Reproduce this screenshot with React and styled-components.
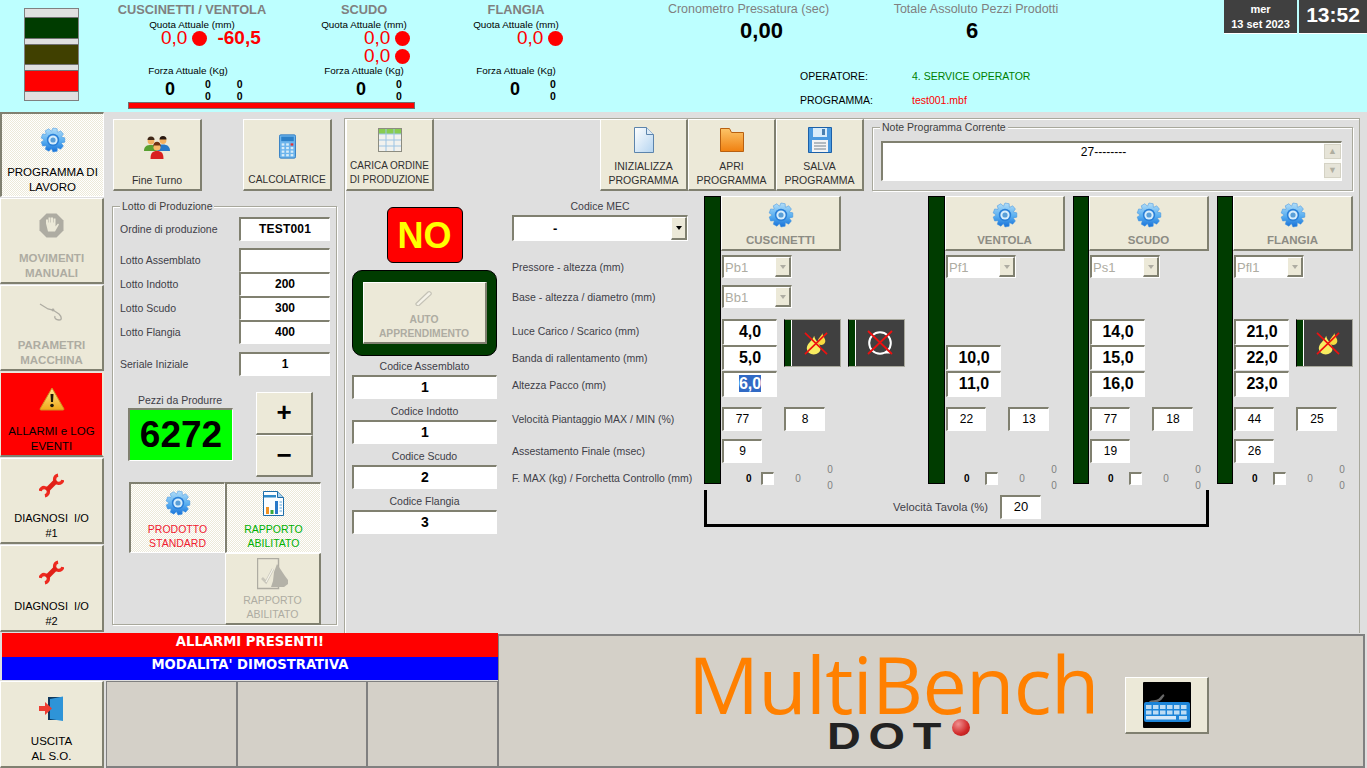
import styled, { createGlobalStyle, css } from 'styled-components';

const FACE = '#ece9d8';
const SHADOW = '#808070';
const GREEN = '#003c00';
const PANEL = '#d4d0c8';

const GlobalStyle = createGlobalStyle`
    html, body { margin: 0; padding: 0; background: #dfdfdf; }
    body { font-family: "Liberation Sans", Arial, sans-serif; font-size: 10px; color: #000; overflow: hidden; }
    * { box-sizing: border-box; }
`;

const raised = css`
    border-style: solid;
    border-width: 1px 2px 2px 1px;
    border-color: #fff ${SHADOW} ${SHADOW} #fff;
`;
const sunken = css`
    border-style: solid;
    border-width: 2px 1px 1px 2px;
    border-color: ${SHADOW} #fff #fff ${SHADOW};
`;

/* ---------- icone ---------- */

const gearPoints = (() => {
    const pts = [];
    const teeth = 9;
    for (let i = 0; i < teeth; i++) {
        const a = (i / teeth) * Math.PI * 2;
        const step = (Math.PI * 2) / teeth;
        [[-0.5, 9], [-0.27, 12], [0.27, 12], [0.5, 9]].forEach(([o, r]) => {
            pts.push(`${(13 + Math.cos(a + o * step * 0.95) * r).toFixed(2)},${(13 + Math.sin(a + o * step * 0.95) * r).toFixed(2)}`);
        });
    }
    return pts.join(' ');
})();

const Gear = () => (
    <svg width="26" height="26" viewBox="0 0 26 26">
        <defs>
            <linearGradient id="gearFill" x1="0" y1="0" x2="0" y2="1">
                <stop offset="0" stopColor="#b4def8" />
                <stop offset="0.55" stopColor="#58aef0" />
                <stop offset="1" stopColor="#1670d8" />
            </linearGradient>
        </defs>
        <polygon points={gearPoints} fill="url(#gearFill)" stroke="#3a90e0" strokeWidth="0.5" />
        <circle cx="13" cy="13" r="6.2" fill="#2a80d8" />
        <circle cx="13" cy="13" r="4.6" fill="#d8eefc" />
        <circle cx="13" cy="13" r="2.6" fill="#5a9fd8" />
    </svg>
);

const People = () => (
    <svg width="26" height="24" viewBox="0 0 26 24">
        <circle cx="7" cy="6" r="3.4" fill="#f4b060" />
        <path d="M3.5 5a3.5 3.5 0 0 1 7 0z" fill="#402818" />
        <path d="M0 16c0-5 3-6 7-6s6 2 6 6z" fill="#58a030" />
        <circle cx="19" cy="5.5" r="3.4" fill="#f4b060" />
        <path d="M15.5 4.5a3.5 3.5 0 0 1 7 0z" fill="#281810" />
        <path d="M13 16c0-5 2-6.5 6-6.5s7 2 7 6.5z" fill="#2878c8" />
        <circle cx="13" cy="12" r="3.6" fill="#f8b868" />
        <path d="M9 12c0-7 8-7 8 0l-1-1.5h-6z" fill="#703010" />
        <path d="M6.5 24c0-6 2-8 6.5-8s6.5 2 6.5 8z" fill="#d82020" />
    </svg>
);

const Calculator = () => (
    <svg width="17" height="25" viewBox="0 0 19 27">
        <rect x="0.5" y="0.5" width="18" height="26" rx="1.5" fill="#6cb4ec" stroke="#2878c0" />
        <rect x="2.5" y="2.5" width="14" height="5" fill="#2c80c8" />
        {[10, 14, 18, 22].map(y => [3, 8, 13].map(x => (
            <rect key={`${x}-${y}`} x={x} y={y} width="3" height="2.5" fill={x === 13 && y === 10 ? '#e83030' : '#d8ecf8'} />
        )))}
    </svg>
);

const TableIcon = () => (
    <svg width="24" height="24" viewBox="0 0 24 24">
        <rect x="0.5" y="0.5" width="23" height="23" fill="#f2f2ee" stroke="#8c8c80" />
        <rect x="1" y="1" width="22" height="5" fill="#88cc50" />
        <path d="M8 1v22M16 1v22M1 6h22M1 12h22M1 18h22" stroke="#9cc4e4" strokeWidth="1" fill="none" />
    </svg>
);

const DocIcon = () => (
    <svg width="20" height="26" viewBox="0 0 20 26">
        <defs>
            <linearGradient id="docFill" x1="0" y1="0" x2="1" y2="1">
                <stop offset="0" stopColor="#ffffff" />
                <stop offset="1" stopColor="#b4d4f0" />
            </linearGradient>
        </defs>
        <path d="M0.5 0.5h12l7 7v18h-19z" fill="url(#docFill)" stroke="#5c84ac" />
        <path d="M12.5 0.5v7h7" fill="#dceaf6" stroke="#5c84ac" />
    </svg>
);

const FolderIcon = () => (
    <svg width="24" height="25" viewBox="0 0 24 25">
        <defs>
            <linearGradient id="folderFill" x1="0" y1="0" x2="0" y2="1">
                <stop offset="0" stopColor="#fcc468" />
                <stop offset="1" stopColor="#f08010" />
            </linearGradient>
        </defs>
        <path d="M0.5 1.5h9l2 4h12v19h-23z" fill="url(#folderFill)" stroke="#b86010" />
    </svg>
);

const FloppyIcon = () => (
    <svg width="24" height="26" viewBox="0 0 24 26">
        <path d="M0.5 0.5h23v25h-23z" fill="#4a9ae0" stroke="#1c60a8" />
        <rect x="5" y="1" width="14" height="9" fill="#d8ecfa" />
        <rect x="14" y="2" width="3" height="6" fill="#4a80b0" />
        <rect x="4" y="13" width="16" height="12" fill="#f4f4f4" />
        <path d="M6 16h12M6 19h12M6 22h12" stroke="#70808c" strokeWidth="1.2" />
    </svg>
);

const StopHand = () => (
    <svg width="25" height="25" viewBox="0 0 25 25">
        <polygon points="7.5,0.5 17.5,0.5 24.5,7.5 24.5,17.5 17.5,24.5 7.5,24.5 0.5,17.5 0.5,7.5" fill="#aeaca2" />
        <path d="M7 10.5v-4h2v3h.5v-5h2v5h.5v-5h2v5h.5v-4h2v8l2.5-3 1 1-4 7h-7z" fill="#ece9d8" />
    </svg>
);

const HookIcon = () => (
    <svg width="26" height="18" viewBox="0 0 26 18" fill="none">
        <path d="M1 1l8 5 5 1 6 4c3 3 3 6 0 6s-5-2-4-4" stroke="#aeaca2" strokeWidth="1.3" />
        <circle cx="14" cy="7" r="1.4" fill="#aeaca2" />
    </svg>
);

const Warning = () => (
    <svg width="26" height="24" viewBox="0 0 26 24">
        <defs>
            <linearGradient id="warnFill" x1="0" y1="0" x2="0" y2="1">
                <stop offset="0" stopColor="#ffe890" />
                <stop offset="1" stopColor="#f0a818" />
            </linearGradient>
        </defs>
        <path d="M13 1l12 21a1 1 0 0 1-1 1H2a1 1 0 0 1-1-1z" fill="url(#warnFill)" stroke="#d09020" strokeLinejoin="round" />
        <path d="M11.5 7h3l-.5 8h-2z" fill="#201808" />
        <circle cx="13" cy="18.5" r="1.8" fill="#201808" />
    </svg>
);

const WrenchIcon = () => (
    <svg width="25" height="25" viewBox="0 0 24 24" fill="none" stroke="#ee2a20">
        <path d="M18.3 2.06A4 4 0 1 0 22.9 6.7" strokeWidth="3.2" />
        <path d="M5.7 21.9A4 4 0 1 0 1.06 17.3" strokeWidth="3.2" />
        <path d="M7.5 16.5l9-9" strokeWidth="4.6" stroke="#e02018" />
    </svg>
);

const ReportIcon = () => (
    <svg width="21" height="25" viewBox="0 0 21 25">
        <path d="M0.5 0.5h14l6 6v18h-20z" fill="#fbfdff" stroke="#1c6ca8" />
        <path d="M14.5 0.5v6h6" fill="#a8d0ec" stroke="#1c6ca8" />
        <rect x="1" y="4" width="12" height="2.5" fill="#2c88c8" />
        <rect x="3" y="16" width="3" height="7" fill="#f09020" />
        <rect x="7.5" y="19" width="3" height="4" fill="#38a838" />
        <rect x="12" y="10" width="3" height="13" fill="#2878c8" />
        <path d="M16.5 11h2.5M16.5 14h2.5M16.5 17h2.5M16.5 20h2.5" stroke="#5ca8dc" />
    </svg>
);

const GreyCheckDoc = () => (
    <svg width="32" height="32" viewBox="0 0 32 32" fill="none">
        <path d="M0.5 0.5h21v30h-21z" stroke="#aeaca2" strokeWidth="1.4" />
        <path d="M20 6l4 6 4 6 3 4v4l-4 3H14l2-6 1-9z" fill="#b4b2a8" />
        <path d="M5 20l4 4 7-13" stroke="#c8c6ba" strokeWidth="2.6" />
        <path d="M9 24l7-13" stroke="#f6f4ea" strokeWidth="1.2" />
    </svg>
);

const DoorIcon = () => (
    <svg width="25" height="25" viewBox="0 0 25 25">
        <rect x="9" y="1" width="15" height="23" fill="#10385c" />
        <path d="M11 3l13-2.5v24.5l-13-2z" fill="#2e94d8" />
        <path d="M0 10h6V6l7 6.5-7 6.5v-4H0z" fill="#ee3c30" />
    </svg>
);

const ClipIcon = () => (
    <svg width="18" height="15" viewBox="0 0 18 15" fill="none">
        <path d="M1 12.5L13 1c1.5-1 4 .5 3 2.5L4 14.5c-1.5 1-3.5-1-3-2z" stroke="#c4c2b6" strokeWidth="1.2" fill="#f4f2e8" />
    </svg>
);

const FlameCrossed = () => (
    <svg width="24" height="23" viewBox="0 0 26 25">
        <path d="M11 4C9 10 3 12 3 18a7.5 6.500 0 0 0 15 0c0-5-6-8-7-14z" fill="#f8ec60" />
        <path d="M20 1c-1 4-6 6-5 11 1 3 7 3 8-1 1-4-3-6-3-10z" fill="#f8dc40" />
        <path d="M1 1l24 23M25 1L1 24" stroke="#ee1010" strokeWidth="1.8" />
    </svg>
);

const HoseCrossed = () => (
    <svg width="26" height="26" viewBox="0 0 26 26" fill="none">
        <circle cx="13" cy="13" r="10.8" stroke="#fff" strokeWidth="2" />
        <path d="M18 22.5h5" stroke="#fff" strokeWidth="2" />
        <path d="M1 1l24 23M25 1L1 24" stroke="#ee1010" strokeWidth="1.8" />
    </svg>
);

const KeyboardIcon = () => (
    <svg width="48" height="46" viewBox="0 0 48 46">
        <rect width="48" height="46" rx="1" fill="#000" />
        <path d="M6 24c0-7 6-3 10-6 3-2 3-4 5-5" stroke="#686868" strokeWidth="2.5" fill="none" />
        <rect x="1" y="20" width="46" height="20" rx="2" fill="#1c84d8" />
        {[23, 28.5].map(y => [3, 10, 17, 24, 31, 38].map(x => (
            <rect key={`${x}-${y}`} x={x} y={y} width="5.5" height="4" fill="#bcdcf4" />
        )))}
        <rect x="3" y="34" width="30" height="3.5" fill="#d4e8f8" />
        <rect x="36" y="34" width="8" height="3.5" fill="#bcdcf4" />
    </svg>
);

/* ---------- testata ---------- */

const Header = styled.header`
    display: flex;
    height: 112px;
    background: #bdffff;
    overflow: hidden;
`;
const StackCol = styled.div`
    width: 117px;
    padding: 8px 0 0 24px;
`;
const Stack = styled.div`
    width: 55px;
    height: 93px;
    border: 1px solid #808080;
    display: flex;
    flex-direction: column;
`;
const StackPart = styled.div`
    height: ${p => p.$h}px;
    background: ${p => p.$c};
    border-bottom: 1px solid #707070;
    &:last-child { border-bottom: 0; }
`;
const Gauges = styled.div`
    width: 487px;
    display: flex;
    flex-direction: column;
`;
const GaugeRow = styled.div`
    display: grid;
    grid-template-columns: 150px 33px 128px 176px;
`;
const Gauge = styled.div`
    grid-column: ${p => p.$col};
    height: 102px;
    padding-top: 3px;
`;
const GaugeTitle = styled.div`
    height: 14px;
    text-align: center;
    font-size: 12.8px;
    line-height: 14px;
    font-weight: bold;
    color: #808080;
    white-space: nowrap;
`;
const SmallCaption = styled.div`
    height: 13px;
    margin-top: 1px;
    padding-right: ${p => p.$pr || 0}px;
    text-align: center;
    font-size: 9.9px;
    line-height: 13px;
    white-space: nowrap;
`;
const QuotaRows = styled.div`
    height: 34px;
    margin-top: -2px;
    margin-bottom: 1px;
    padding-left: ${p => p.$left}px;
`;
const QuotaRow = styled.div`
    display: flex;
    align-items: center;
    height: 18px;
    gap: 5px;
`;
const QuotaValue = styled.span`
    font-size: 19px;
    color: #f00;
    font-weight: ${p => (p.$bold ? 'bold' : 'normal')};
    margin-left: ${p => (p.$bold ? 5 : 0)}px;
    line-height: 18px;
`;
const Led = styled.span`
    width: 15px;
    height: 15px;
    border-radius: 50%;
    background: #f00;
`;
const ForceRow = styled.div`
    display: flex;
    align-items: center;
    gap: 30px;
    height: 24px;
    padding-left: ${p => p.$left}px;
`;
const BigZero = styled.span`
    font-size: 18px;
    font-weight: bold;
`;
const MiniStack = styled.span`
    display: flex;
    flex-direction: column;
    font-size: 10.5px;
    line-height: 12px;
    font-weight: bold;
    margin-top: 1px;
    & + & { margin-left: -4px; }
`;
const RedBar = styled.div`
    width: 287px;
    height: 7px;
    margin-left: 11px;
    background: #f00;
    border: 1px solid #707070;
`;
const Readouts = styled.div`
    width: 620px;
    display: flex;
    flex-direction: column;
`;
const ReadoutRow = styled.div`
    display: flex;
    gap: 63px;
    padding: 2px 0 0 63px;
    height: 67px;
`;
const Readout = styled.div`
    width: ${p => p.$w}px;
    text-align: center;
`;
const ReadoutLabel = styled.div`
    color: #808080;
    font-size: 12.5px;
    line-height: 14px;
    white-space: nowrap;
`;
const ReadoutValue = styled.div`
    font-size: 22px;
    font-weight: bold;
    line-height: 30px;
    padding-left: ${p => p.$pl || 0}px;
    padding-right: ${p => p.$pr || 0}px;
`;
const MetaGrid = styled.div`
    display: grid;
    grid-template-columns: 112px auto;
    grid-auto-rows: 24px;
    padding-left: 196px;
    font-size: 10.5px;
    line-height: 25px;
`;
const MetaValue = styled.span`
    color: ${p => p.$c};
`;
const Clock = styled.div`
    display: flex;
    gap: 2px;
    height: 34px;
`;
const ClockBox = styled.div`
    width: ${p => p.$w}px;
    background: #404040;
    border-bottom: 1px solid #fff;
    color: #fff;
    font-weight: bold;
    text-align: center;
    font-size: 11px;
    line-height: 15px;
    padding-top: 2px;
`;
const ClockTime = styled.div`
    font-size: 21px;
    line-height: 26px;
`;

/* ---------- pulsanti ---------- */

const PressButton = styled.div`
    ${raised}
    width: ${p => p.$w}px;
    height: ${p => p.$h}px;
    flex: none;
    background: ${FACE};
    display: flex;
    flex-direction: column;
    align-items: center;
    text-align: center;
    padding-bottom: ${p => p.$pb ?? 2}px;
    color: ${p => p.$c || '#303030'};
    font-size: ${p => p.$fs || 10.5}px;
    line-height: ${p => p.$lh || 14}px;
    font-weight: ${p => (p.$bold ? 'bold' : 'normal')};
    white-space: pre;
    ${p => p.$on && css`
        border-width: 2px 1px 1px 2px;
        border-color: ${SHADOW} #fff #fff ${SHADOW};
        background: repeating-conic-gradient(#fff 0 25%, ${FACE} 0 50%) 0 0 / 2px 2px;
    `}
    ${p => p.$alarm && css`
        background: #f00;
        border-color: ${FACE} ${FACE} ${SHADOW} ${FACE};
    `}
`;
const IconSlot = styled.div`
    flex: 1;
    display: flex;
    align-items: center;
    justify-content: center;
`;

const Btn = ({ icon, lines, ...rest }) => (
    <PressButton {...rest}>
        <IconSlot>{icon}</IconSlot>
        {lines.map(l => <div key={l}>{l}</div>)}
    </PressButton>
);

/* ---------- layout principale ---------- */

const Middle = styled.div`
    display: flex;
    height: 521px;
`;
const Nav = styled.nav`
    width: 105px;
    display: flex;
    flex-direction: column;
    gap: 1px;
    flex: none;
`;
const LeftPanel = styled.section`
    width: 239px;
    flex: none;
    padding: 7px 0 0 8px;
`;
const TopButtons = styled.div`
    display: flex;
    gap: 41px;
`;
const GroupBox = styled.div`
    position: relative;
    border: 1px solid #a8a89c;
    box-shadow: inset 1px 1px 0 #fff, 1px 1px 0 #fff;
`;
const GroupLegend = styled.span`
    position: absolute;
    top: -7px;
    left: 7px;
    padding: 0 2px;
    background: #dfdfdf;
    font-size: 10.5px;
    line-height: 13px;
    color: #404040;
    white-space: nowrap;
`;
const LotBox = styled(GroupBox)`
    width: 225px;
    height: 419px;
    margin: 15px 0 0 -1px;
    padding: 10px 0 0 7px;
`;
const LotGrid = styled.div`
    display: grid;
    grid-template-columns: 119px 91px;
    grid-template-rows: 31px 24px 24px 24px 32px 24px;
    align-items: start;
`;
const FormLabel = styled.span`
    font-size: 10.5px;
    line-height: 24px;
    color: #404048;
    white-space: nowrap;
`;
const TableLabel = styled(FormLabel)`
    font-size: 11.2px;
`;
const Value = styled.div`
    ${sunken}
    background: #fff;
    width: ${p => p.$w ? `${p.$w}px` : '100%'};
    height: ${p => p.$h || 24}px;
    text-align: center;
    font-size: ${p => p.$fs || 12}px;
    font-weight: ${p => (p.$normal ? 'normal' : 'bold')};
    line-height: ${p => (p.$h || 24) - 4}px;
    letter-spacing: ${p => p.$ls || 0}px;
    white-space: nowrap;
`;
const Selected = styled.span`
    background: #316ac5;
    color: #fff;
`;
const CountRow = styled.div`
    display: flex;
    margin-top: 16px;
    padding-left: 8px;
`;
const CountLeft = styled.div`
    width: 128px;
`;
const CountLabel = styled.div`
    width: 104px;
    height: 16px;
    text-align: center;
    font-size: 10.5px;
    line-height: 16px;
    color: #404048;
`;
const CountDisplay = styled.div`
    ${sunken}
    width: 105px;
    height: 53px;
    background: #0f0;
    text-align: center;
    font-size: 37px;
    font-weight: bold;
    line-height: 49px;
`;
const Stepper = styled.div`
    display: flex;
    flex-direction: column;
`;
const StepBtn = styled.div`
    ${raised}
    width: 57px;
    height: ${p => p.$h}px;
    background: ${FACE};
    text-align: center;
    font-size: 26px;
    font-weight: bold;
    line-height: ${p => p.$h - 4}px;
`;
const ModeGrid = styled.div`
    display: grid;
    grid-template-columns: 96px 96px;
    grid-template-rows: 71px 72px;
    margin: 5px 0 0 9px;
`;
const ModeSlot = styled.div`
    grid-column: ${p => p.$col};
    grid-row: ${p => p.$row};
`;

const RightPanel = styled.section`
    width: 1016px;
    height: 515px;
    margin-top: 6px;
    border: 1px solid #a8a89c;
    border-bottom: 0;
    box-shadow: inset 1px 1px 0 #fff;
`;
const Toolbar = styled.div`
    display: flex;
    height: 73px;
    padding-left: 1px;
`;
const ToolGroup = styled.div`
    display: flex;
    margin-left: 166px;
`;
const NoteBox = styled(GroupBox)`
    width: 481px;
    height: 64px;
    margin: 8px 0 0 8px;
    padding: 13px 0 0 8px;
`;
const NoteArea = styled.div`
    ${sunken}
    width: 461px;
    height: 40px;
    background: #fff;
    display: flex;
    font-size: 12px;
    line-height: 18px;
    text-align: center;
`;
const NoteText = styled.div`
    flex: 1;
`;
const NoteScroll = styled.div`
    width: 17px;
    display: flex;
    flex-direction: column;
    gap: 4px;
    padding-top: 1px;
    background: #fbfbf6;
`;
const ScrollBtn = styled.div`
    height: 15px;
    background: #e6e4d8;
    border: 1px solid #d4d2c4;
    color: #b0aea0;
    font-size: 9px;
    line-height: 13px;
    text-align: center;
`;
const Body = styled.div`
    display: grid;
    grid-template-columns: 160px 192px auto;
    margin-top: 4px;
    padding-left: 7px;
`;
const SetupCol = styled.div`
    width: 145px;
    display: flex;
    flex-direction: column;
    align-items: center;
`;
const NoBadge = styled.div`
    width: 76px;
    height: 56px;
    margin-top: 11px;
    background: #f00;
    border: 1px solid #000;
    border-radius: 6px;
    color: #ff0;
    font-size: 36px;
    font-weight: bold;
    line-height: 56px;
    text-align: center;
`;
const AutoFrame = styled.div`
    width: 145px;
    height: 86px;
    margin-top: 7px;
    background: ${GREEN};
    border-radius: 10px;
    border: 1px solid #000;
    display: flex;
    align-items: center;
    justify-content: center;
    margin-bottom: 2px;
`;
const CodeField = styled.div`
    width: 100%;
    height: 45px;
`;
const CodeLabel = styled.div`
    height: 17px;
    text-align: center;
    font-size: 10.5px;
    line-height: 16px;
    color: #404048;
`;
const LabelsCol = styled.div`
    display: grid;
    grid-template-rows: 59px 30px 34px 27px 27px 34px 32px 27px 26px;
`;
const MecCell = styled.div`
    width: 176px;
`;
const MecCaption = styled.div`
    height: 19px;
    text-align: center;
    font-size: 10.5px;
    line-height: 21px;
    color: #404048;
`;
const Combo = styled.div`
    ${sunken}
    width: ${p => p.$w}px;
    height: ${p => p.$h}px;
    background: #fff;
    display: flex;
    align-items: center;
    justify-content: space-between;
    color: ${p => (p.$off ? '#aeaca2' : '#000')};
    font-size: 13px;
    font-weight: ${p => (p.$off ? 'normal' : 'bold')};
`;
const ComboText = styled.span`
    padding-left: ${p => p.$pl}px;
`;
const ComboArrow = styled.span`
    ${raised}
    width: 16px;
    height: 100%;
    background: ${FACE};
    display: flex;
    align-items: center;
    justify-content: center;
    &::after {
        content: '';
        border-style: solid;
        border-width: 4px 3.5px 0 3.5px;
        border-color: ${p => (p.$off ? '#aeaca2' : '#000')} transparent transparent transparent;
    }
`;
const Machines = styled.div`
    display: grid;
    grid-template-columns: 224px 145px 144px 136px;
    height: 294px;
`;
const MachineCol = styled.div`
    display: flex;
    align-items: flex-start;
`;
const MachineBar = styled.div`
    width: ${p => p.$w}px;
    height: 288px;
    flex: none;
    background: ${GREEN};
    border: 1px solid #000;
`;
const MachineGrid = styled.div`
    display: grid;
    grid-template-columns: 63px 64px;
    grid-template-rows: 59px 30px 34px 26px 26px 36px 32px 25px 28px;
    align-items: start;
`;
const Cell = styled.div`
    grid-row: ${p => p.$row};
    grid-column: ${p => p.$col || '1'};
    padding-left: ${p => p.$pl ?? 1}px;
`;
const HazardTile = styled.div`
    width: 57px;
    height: 48px;
    display: flex;
    border: 1px solid #a8a89c;
    border-left: 1px solid #000;
    background: #404040;
`;
const TileStrip = styled.span`
    width: 7px;
    background: ${GREEN};
    border-right: 1px solid #fff;
`;
const TileBody = styled.span`
    flex: 1;
    display: flex;
    align-items: center;
    justify-content: center;
`;
const Footer = styled.div`
    grid-row: 9;
    grid-column: 1 / -1;
    width: 118px;
    height: 28px;
    margin-top: -2px;
    display: grid;
    grid-template-columns: 40px 14px 46px 18px;
    align-items: center;
    font-size: 10px;
    color: #808080;
    text-align: center;
`;
const CountZero = styled.span`
    color: #000;
    font-weight: bold;
    text-align: left;
    padding-left: ${p => p.$pl}px;
`;
const TickBox = styled.span`
    ${sunken}
    width: 13px;
    height: 13px;
    background: #fff;
`;
const ZeroPair = styled.span`
    display: flex;
    flex-direction: column;
    line-height: 16px;
`;
const Bracket = styled.div`
    width: 505px;
    height: 37px;
    border: 3px solid #000;
    border-top: 0;
    display: flex;
    gap: 12px;
    padding: 5px 0 0 186px;
`;

/* ---------- fondo pagina ---------- */

const Bottom = styled.footer`
    display: flex;
    height: 135px;
`;
const BottomLeft = styled.div`
    width: 498px;
    flex: none;
    display: flex;
    flex-direction: column;
`;
const Banner = styled.div`
    width: 496px;
    height: ${p => p.$h}px;
    margin-left: 2px;
    background: ${p => p.$c};
    color: #fff;
    font-family: "DejaVu Sans", sans-serif;
    font-weight: bold;
    font-size: 13.2px;
    line-height: ${p => p.$lh}px;
    text-align: center;
    white-space: nowrap;
`;
const BottomRow = styled.div`
    display: flex;
    margin-top: 1px;
`;
const EmptySlots = styled.div`
    display: grid;
    grid-template-columns: 131px 130px 131px;
    margin-left: 2px;
    height: 87px;
`;
const EmptySlot = styled.div`
    background: ${PANEL};
    border: 1px solid #808080;
    border-width: 1px 1px 2px 1px;
`;
const BrandPanel = styled.div`
    flex: 1;
    height: 134px;
    margin: 1px 2px 0 0;
    background: ${PANEL};
    border: 2px solid #808080;
    border-left-width: 1px;
    display: flex;
    padding-left: 191px;
`;
const Brand = styled.div`
    width: 435px;
`;
const BrandName = styled.div`
    font-family: "Open Sans", sans-serif;
    font-size: 79px;
    line-height: 78px;
    margin: 9px 0 0 -2px;
    color: #ff8000;
    white-space: nowrap;
    letter-spacing: -0.7px;
`;
const DotRow = styled.div`
    display: flex;
    align-items: flex-start;
    padding-left: 137px;
    margin-top: -3px;
`;
const DotText = styled.span`
    width: 125px;
    font-family: "Liberation Sans", sans-serif;
    font-weight: bold;
    font-size: 36px;
    line-height: 34px;
    color: #222;
    letter-spacing: 6px;
    transform: scaleX(1.3);
    transform-origin: left;
`;
const DotBall = styled.span`
    width: 18px;
    height: 17px;
    margin-top: -1px;
    border-radius: 50%;
    background: radial-gradient(circle at 35% 30%, #f09090, #d02828 60%, #a01818);
`;
const KeyButton = styled.div`
    ${raised}
    width: 84px;
    height: 57px;
    margin-top: 41px;
    background: ${FACE};
    display: flex;
    align-items: center;
    justify-content: center;
`;

const GREY = '#aeaca2';

const Machine = ({ name, combos, luce, banda, altezza, vmax, vmin, settle, barW = 17, countPad = 19, tiles = [] }) => (
    <MachineCol>
        <MachineBar $w={barW} />
        <MachineGrid>
            <Cell $row="1" $col="1 / -1" $pl={0}>
                <Btn icon={<Gear />} lines={[name]} $w={120} $h={55} $c="#8c8c84" $bold $fs={11.5} $pb={2} />
            </Cell>
            {combos.map((c, i) => (
                <Cell key={c} $row={i + 2} $col="1 / -1">
                    <Combo $off $w={70} $h={23}>
                        <ComboText $pl={1}>{c}</ComboText>
                        <ComboArrow $off />
                    </Combo>
                </Cell>
            ))}
            {luce && <Cell $row="4"><Value $w={55} $h={26} $fs={16}>{luce}</Value></Cell>}
            {tiles.map((t, i) => (
                <Cell key={i} $row="4 / span 2" $col={`${i + 2}`} $pl={0}>
                    <HazardTile><TileStrip /><TileBody>{t}</TileBody></HazardTile>
                </Cell>
            ))}
            <Cell $row="5"><Value $w={55} $h={25} $fs={16}>{banda}</Value></Cell>
            <Cell $row="6"><Value $w={55} $h={26} $fs={16}>{altezza}</Value></Cell>
            <Cell $row="7"><Value $w={40} $h={24} $normal>{vmax}</Value></Cell>
            <Cell $row="7" $col="2" $pl={0}><Value $w={41} $h={24} $normal>{vmin}</Value></Cell>
            {settle && <Cell $row="8"><Value $w={40} $h={24} $normal>{settle}</Value></Cell>}
            <Footer>
                <CountZero $pl={countPad}>0</CountZero>
                <TickBox />
                <span>0</span>
                <ZeroPair><span>0</span><span>0</span></ZeroPair>
            </Footer>
        </MachineGrid>
    </MachineCol>
);

const Gauge3 = ({ col, title, rows, quotaLeft, forceLeft, minis, forcePr, extra }) => (
    <Gauge $col={col}>
        <GaugeTitle>{title}</GaugeTitle>
        <SmallCaption>Quota Attuale (mm)</SmallCaption>
        <QuotaRows $left={quotaLeft}>
            {Array.from({ length: rows }).map((_, i) => (
                <QuotaRow key={i}>
                    <QuotaValue>0,0</QuotaValue>
                    <Led />
                    {extra && <QuotaValue $bold>{extra}</QuotaValue>}
                </QuotaRow>
            ))}
        </QuotaRows>
        <SmallCaption $pr={forcePr}>Forza Attuale (Kg)</SmallCaption>
        <ForceRow $left={forceLeft}>
            <BigZero>0</BigZero>
            {Array.from({ length: minis }).map((_, i) => (
                <MiniStack key={i}><span>0</span><span>0</span></MiniStack>
            ))}
        </ForceRow>
    </Gauge>
);

export default function App() {
    return (
        <>
            <GlobalStyle />
            <Header>
                <StackCol>
                    <Stack>
                        <StackPart $h={9} $c="#e0e0e0" />
                        <StackPart $h={21} $c={GREEN} />
                        <StackPart $h={6} $c="#e0e0e0" />
                        <StackPart $h={21} $c="#404000" />
                        <StackPart $h={6} $c="#e0e0e0" />
                        <StackPart $h={21} $c="#f00" />
                        <StackPart $h={8} $c="#e0e0e0" />
                    </Stack>
                </StackCol>
                <Gauges>
                    <GaugeRow>
                        <Gauge3 col="1" title="CUSCINETTI / VENTOLA" rows={1} extra="-60,5" quotaLeft={44} forceLeft={48} minis={2} forcePr={8} />
                        <Gauge3 col="3" title="SCUDO" rows={2} quotaLeft={64} forceLeft={56} minis={1} />
                        <Gauge3 col="4" title="FLANGIA" rows={1} quotaLeft={89} forceLeft={82} minis={1} />
                    </GaugeRow>
                    <RedBar />
                </Gauges>
                <Readouts>
                    <ReadoutRow>
                        <Readout $w={163}>
                            <ReadoutLabel>Cronometro Pressatura (sec)</ReadoutLabel>
                            <ReadoutValue $pl={26}>0,00</ReadoutValue>
                        </Readout>
                        <Readout $w={166}>
                            <ReadoutLabel>Totale Assoluto Pezzi Prodotti</ReadoutLabel>
                            <ReadoutValue $pr={8}>6</ReadoutValue>
                        </Readout>
                    </ReadoutRow>
                    <MetaGrid>
                        <span>OPERATORE:</span>
                        <MetaValue $c="#008000">4. SERVICE OPERATOR</MetaValue>
                        <span>PROGRAMMA:</span>
                        <MetaValue $c="#f00">test001.mbf</MetaValue>
                    </MetaGrid>
                </Readouts>
                <Clock>
                    <ClockBox $w={73}>mer<br />13 set 2023</ClockBox>
                    <ClockBox $w={68}><ClockTime>13:52</ClockTime></ClockBox>
                </Clock>
            </Header>

            <Middle>
                <Nav>
                    <Btn $on icon={<Gear />} lines={['PROGRAMMA DI', 'LAVORO']} $w={104} $h={85} $c="#000" $fs={11.5} $lh={15} $pb={1} />
                    <Btn icon={<StopHand />} lines={['MOVIMENTI', 'MANUALI']} $w={104} $h={86} $c={GREY} $bold $fs={11.5} $lh={15} $pb={1} />
                    <Btn icon={<HookIcon />} lines={['PARAMETRI', 'MACCHINA']} $w={104} $h={86} $c={GREY} $bold $fs={11.5} $lh={15} $pb={1} />
                    <Btn $alarm icon={<Warning />} lines={['ALLARMI e LOG', 'EVENTI']} $w={104} $h={85} $c="#000" $fs={11.5} $lh={15} $pb={1} />
                    <Btn icon={<WrenchIcon />} lines={['DIAGNOSI  I/O', '#1']} $w={104} $h={86} $c="#000" $fs={11} $lh={15} $pb={1} />
                    <Btn icon={<WrenchIcon />} lines={['DIAGNOSI  I/O', '#2']} $w={104} $h={87} $c="#000" $fs={11} $lh={15} $pb={1} />
                </Nav>
                <LeftPanel>
                    <TopButtons>
                        <Btn icon={<People />} lines={['Fine Turno']} $w={89} $h={72} />
                        <Btn icon={<Calculator />} lines={['CALCOLATRICE']} $w={89} $h={72} $fs={10.2} />
                    </TopButtons>
                    <LotBox>
                        <GroupLegend>Lotto di Produzione</GroupLegend>
                        <LotGrid>
                            <FormLabel>Ordine di produzione</FormLabel>
                            <Value $ls={0.2}>TEST001</Value>
                            <FormLabel>Lotto Assemblato</FormLabel>
                            <Value />
                            <FormLabel>Lotto Indotto</FormLabel>
                            <Value>200</Value>
                            <FormLabel>Lotto Scudo</FormLabel>
                            <Value>300</Value>
                            <FormLabel>Lotto Flangia</FormLabel>
                            <Value>400</Value>
                            <FormLabel>Seriale Iniziale</FormLabel>
                            <Value>1</Value>
                        </LotGrid>
                        <CountRow>
                            <CountLeft>
                                <CountLabel>Pezzi da Produrre</CountLabel>
                                <CountDisplay>6272</CountDisplay>
                            </CountLeft>
                            <Stepper>
                                <StepBtn $h={43}>+</StepBtn>
                                <StepBtn $h={42}>−</StepBtn>
                            </Stepper>
                        </CountRow>
                        <ModeGrid>
                            <ModeSlot $col="1" $row="1">
                                <Btn $on icon={<Gear />} lines={['PRODOTTO', 'STANDARD']} $w={96} $h={71} $c="#f02030" />
                            </ModeSlot>
                            <ModeSlot $col="2" $row="1">
                                <Btn $on icon={<ReportIcon />} lines={['RAPPORTO', 'ABILITATO']} $w={96} $h={71} $c="#00b000" />
                            </ModeSlot>
                            <ModeSlot $col="2" $row="2">
                                <Btn icon={<GreyCheckDoc />} lines={['RAPPORTO', 'ABILITATO']} $w={96} $h={72} $c={GREY} />
                            </ModeSlot>
                        </ModeGrid>
                    </LotBox>
                </LeftPanel>
                <RightPanel>
                    <Toolbar>
                        <Btn icon={<TableIcon />} lines={['CARICA ORDINE', 'DI PRODUZIONE']} $w={88} $h={72} $fs={10} />
                        <ToolGroup>
                            <Btn icon={<DocIcon />} lines={['INIZIALIZZA', 'PROGRAMMA']} $w={88} $h={72} />
                            <Btn icon={<FolderIcon />} lines={['APRI', 'PROGRAMMA']} $w={88} $h={72} />
                            <Btn icon={<FloppyIcon />} lines={['SALVA', 'PROGRAMMA']} $w={88} $h={72} />
                        </ToolGroup>
                        <NoteBox>
                            <GroupLegend>Note Programma Corrente</GroupLegend>
                            <NoteArea>
                                <NoteText>27--------</NoteText>
                                <NoteScroll>
                                    <ScrollBtn>▲</ScrollBtn>
                                    <ScrollBtn>▼</ScrollBtn>
                                </NoteScroll>
                            </NoteArea>
                        </NoteBox>
                    </Toolbar>
                    <Body>
                        <SetupCol>
                            <NoBadge>NO</NoBadge>
                            <AutoFrame>
                                <Btn icon={<ClipIcon />} lines={['AUTO', 'APPRENDIMENTO']} $w={124} $h={62} $c={GREY} $bold $fs={10.3} $pb={1} />
                            </AutoFrame>
                            <CodeField>
                                <CodeLabel>Codice Assemblato</CodeLabel>
                                <Value $fs={14}>1</Value>
                            </CodeField>
                            <CodeField>
                                <CodeLabel>Codice Indotto</CodeLabel>
                                <Value $fs={14}>1</Value>
                            </CodeField>
                            <CodeField>
                                <CodeLabel>Codice Scudo</CodeLabel>
                                <Value $fs={14}>2</Value>
                            </CodeField>
                            <CodeField>
                                <CodeLabel>Codice Flangia</CodeLabel>
                                <Value $fs={14}>3</Value>
                            </CodeField>
                        </SetupCol>
                        <LabelsCol>
                            <MecCell>
                                <MecCaption>Codice MEC</MecCaption>
                                <Combo $w={176} $h={26}>
                                    <ComboText $pl={39}>-</ComboText>
                                    <ComboArrow />
                                </Combo>
                            </MecCell>
                            <FormLabel>Pressore - altezza (mm)</FormLabel>
                            <FormLabel>Base - altezza / diametro (mm)</FormLabel>
                            <FormLabel>Luce Carico / Scarico (mm)</FormLabel>
                            <FormLabel>Banda di rallentamento (mm)</FormLabel>
                            <FormLabel>Altezza Pacco (mm)</FormLabel>
                            <FormLabel>Velocità Piantaggio MAX / MIN (%)</FormLabel>
                            <FormLabel>Assestamento Finale (msec)</FormLabel>
                            <FormLabel>F. MAX (kg) / Forchetta Controllo (mm)</FormLabel>
                        </LabelsCol>
                        <div>
                            <Machines>
                                <Machine
                                    name="CUSCINETTI"
                                    combos={['Pb1', 'Bb1']}
                                    luce="4,0"
                                    banda="5,0"
                                    altezza={<Selected>6,0</Selected>}
                                    vmax="77"
                                    vmin="8"
                                    settle="9"
                                    countPad={25}
                                    tiles={[<FlameCrossed key="f" />, <HoseCrossed key="h" />]}
                                />
                                <Machine name="VENTOLA" combos={['Pf1']} banda="10,0" altezza="11,0" vmax="22" vmin="13" />
                                <Machine name="SCUDO" barW={16} combos={['Ps1']} luce="14,0" banda="15,0" altezza="16,0" vmax="77" vmin="18" settle="19" />
                                <Machine
                                    name="FLANGIA"
                                    barW={16}
                                    combos={['Pfl1']}
                                    luce="21,0"
                                    banda="22,0"
                                    altezza="23,0"
                                    vmax="44"
                                    vmin="25"
                                    settle="26"
                                    tiles={[<FlameCrossed key="f" />]}
                                />
                            </Machines>
                            <Bracket>
                                <TableLabel>Velocità Tavola (%)</TableLabel>
                                <Value $w={41} $h={24} $normal $fs={13}>20</Value>
                            </Bracket>
                        </div>
                    </Body>
                </RightPanel>
            </Middle>

            <Bottom>
                <BottomLeft>
                    <Banner $h={24} $c="#f00" $lh={18}>ALLARMI PRESENTI!</Banner>
                    <Banner $h={23} $c="#00f" $lh={16}>MODALITA' DIMOSTRATIVA</Banner>
                    <BottomRow>
                        <Btn icon={<DoorIcon />} lines={['USCITA', 'AL S.O.']} $w={104} $h={87} $c="#000" $fs={11.5} $lh={15} />
                        <EmptySlots>
                            <EmptySlot />
                            <EmptySlot />
                            <EmptySlot />
                        </EmptySlots>
                    </BottomRow>
                </BottomLeft>
                <BrandPanel>
                    <Brand>
                        <BrandName>MultiBench</BrandName>
                        <DotRow>
                            <DotText>DOT</DotText>
                            <DotBall />
                        </DotRow>
                    </Brand>
                    <KeyButton><KeyboardIcon /></KeyButton>
                </BrandPanel>
            </Bottom>
        </>
    );
}
